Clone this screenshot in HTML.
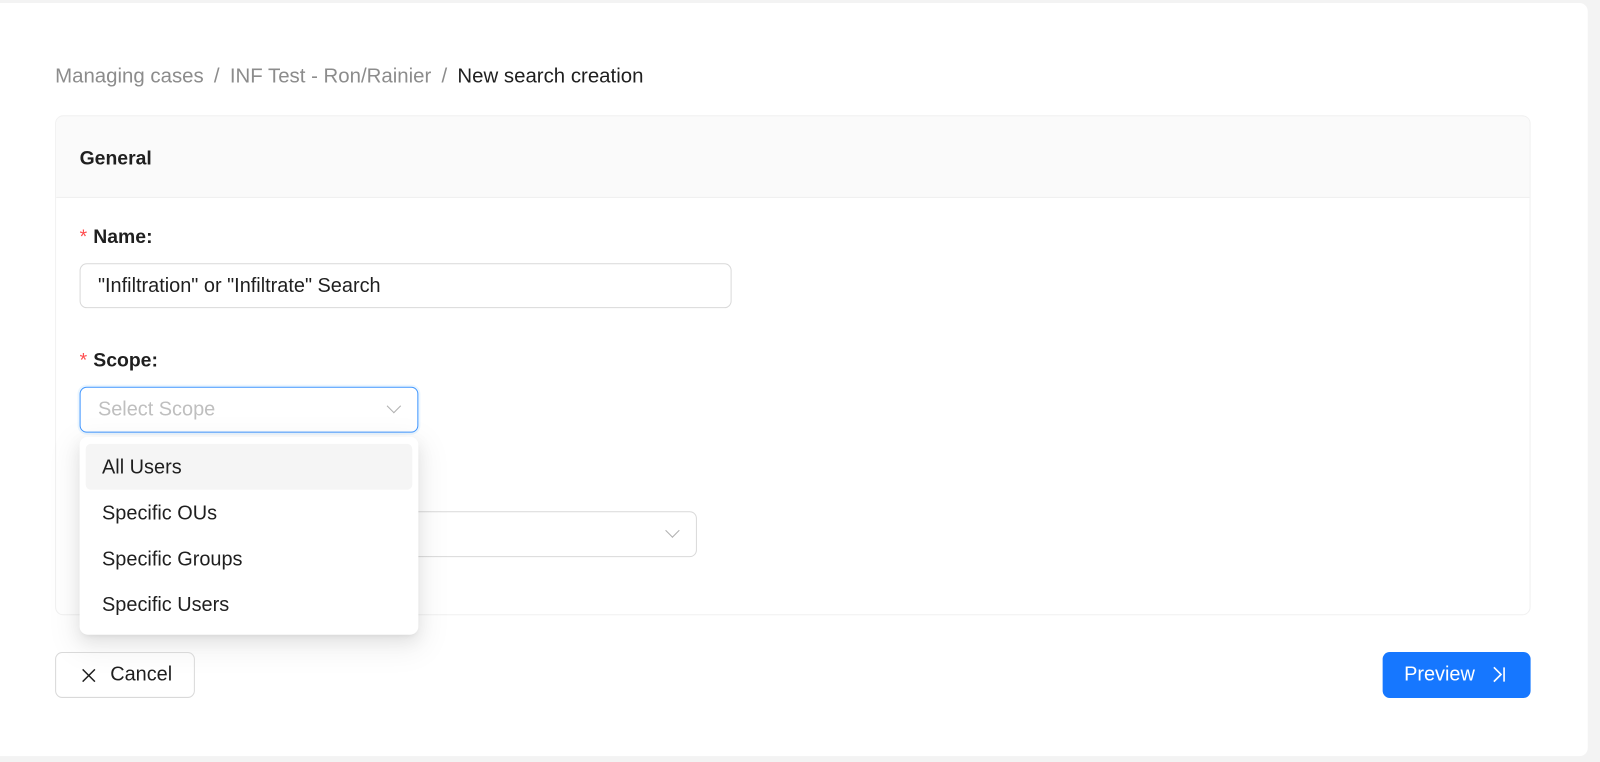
<!DOCTYPE html>
<html><head><style>
*{box-sizing:border-box;margin:0;padding:0}
body{width:1600px;height:762px;background:#f3f3f3;font-family:"Liberation Sans",Arial,sans-serif;position:relative;overflow:hidden;color:#1f1f1f}
#w{position:absolute;left:0;top:0;width:1568px;height:747px;transform:scale(1.0204);transform-origin:0 0}
.panel{position:absolute;left:0;top:3px;width:1556px;height:738px;background:#fff;border-radius:0 8px 8px 0}
.a{position:absolute}
.bc{left:54px;top:64px;font-size:20px;color:#8c8c8c;white-space:nowrap}
.bc b{font-weight:normal;color:#1f1f1f}
.bc span{margin:0 10px}
.card{left:54px;top:113px;width:1446px;height:490px;border:1px solid #f0f0f0;border-radius:8px;overflow:hidden}
.hdr{height:80px;background:#fafafa;border-bottom:1px solid #f0f0f0;padding:31px 0 0 23px;font-size:19px;font-weight:bold;color:#1f1f1f}
.lbl{font-size:19px;font-weight:bold}
.lbl i{color:#ff4d4f;font-style:normal;font-weight:normal;margin-right:6px}
.inp{border:1px solid #d9d9d9;border-radius:7px;font-size:19.5px;padding:0 17px;line-height:43px;background:#fff}
.chev{position:absolute;width:10px;height:10px;border-right:1.3px solid #b0b0b0;border-bottom:1.3px solid #b0b0b0;transform:rotate(45deg)}
.dd{left:78px;top:428px;width:332px;height:194px;background:#fff;border-radius:8px;box-shadow:0 6px 16px rgba(0,0,0,.08),0 3px 6px -4px rgba(0,0,0,.12),0 9px 28px 8px rgba(0,0,0,.05)}
.it{position:absolute;left:6px;width:320px;height:45px;line-height:46px;padding-left:16px;font-size:19.5px;border-radius:5px}
.btn{border-radius:7px;font-size:19.5px;height:45px;line-height:43px}
</style></head><body><div id="w">
<div class="panel"></div>
<div class="a bc">Managing cases<span>/</span>INF Test - Ron/Rainier<span>/</span><b>New search creation</b></div>
<div class="a card"><div class="hdr">General</div></div>
<div class="a lbl" style="left:78px;top:222px"><i>*</i>Name:</div>
<div class="a inp" style="left:78px;top:258px;width:639px;height:44px;color:#1f1f1f">"Infiltration" or "Infiltrate" Search</div>
<div class="a lbl" style="left:78px;top:343px"><i>*</i>Scope:</div>
<div class="a inp" style="left:78px;top:379px;width:332px;height:45px;border-color:#4096ff;color:#bfbfbf;box-shadow:0 0 0 2px rgba(5,145,255,.08)">Select Scope</div>
<div class="chev" style="left:381px;top:393px"></div>
<div class="a inp" style="left:300px;top:501px;width:383px;height:45px"></div>
<div class="chev" style="left:654px;top:515px"></div>
<div class="a dd">
<div class="it" style="top:7px;background:#f5f5f5">All Users</div>
<div class="it" style="top:52px">Specific OUs</div>
<div class="it" style="top:97px">Specific Groups</div>
<div class="it" style="top:142px">Specific Users</div>
</div>
<div class="a btn" style="left:54px;top:639px;width:137px;border:1px solid #d9d9d9">
<svg width="16" height="16" viewBox="0 0 16 16" style="position:absolute;left:24px;top:14px"><path d="M2 2L14 14M14 2L2 14" stroke="#1f1f1f" stroke-width="1.5"/></svg>
<span style="position:absolute;left:53px">Cancel</span></div>
<div class="a btn" style="left:1355px;top:639px;width:145px;background:#1677ff;color:#fff;padding-left:21px;line-height:45px">Preview
<svg width="16" height="18" viewBox="0 0 16 18" style="position:absolute;left:106px;top:13px"><path d="M3 2L10 9L3 16M13 2V16" stroke="#fff" stroke-width="1.6" fill="none"/></svg></div>
</div></body></html>
